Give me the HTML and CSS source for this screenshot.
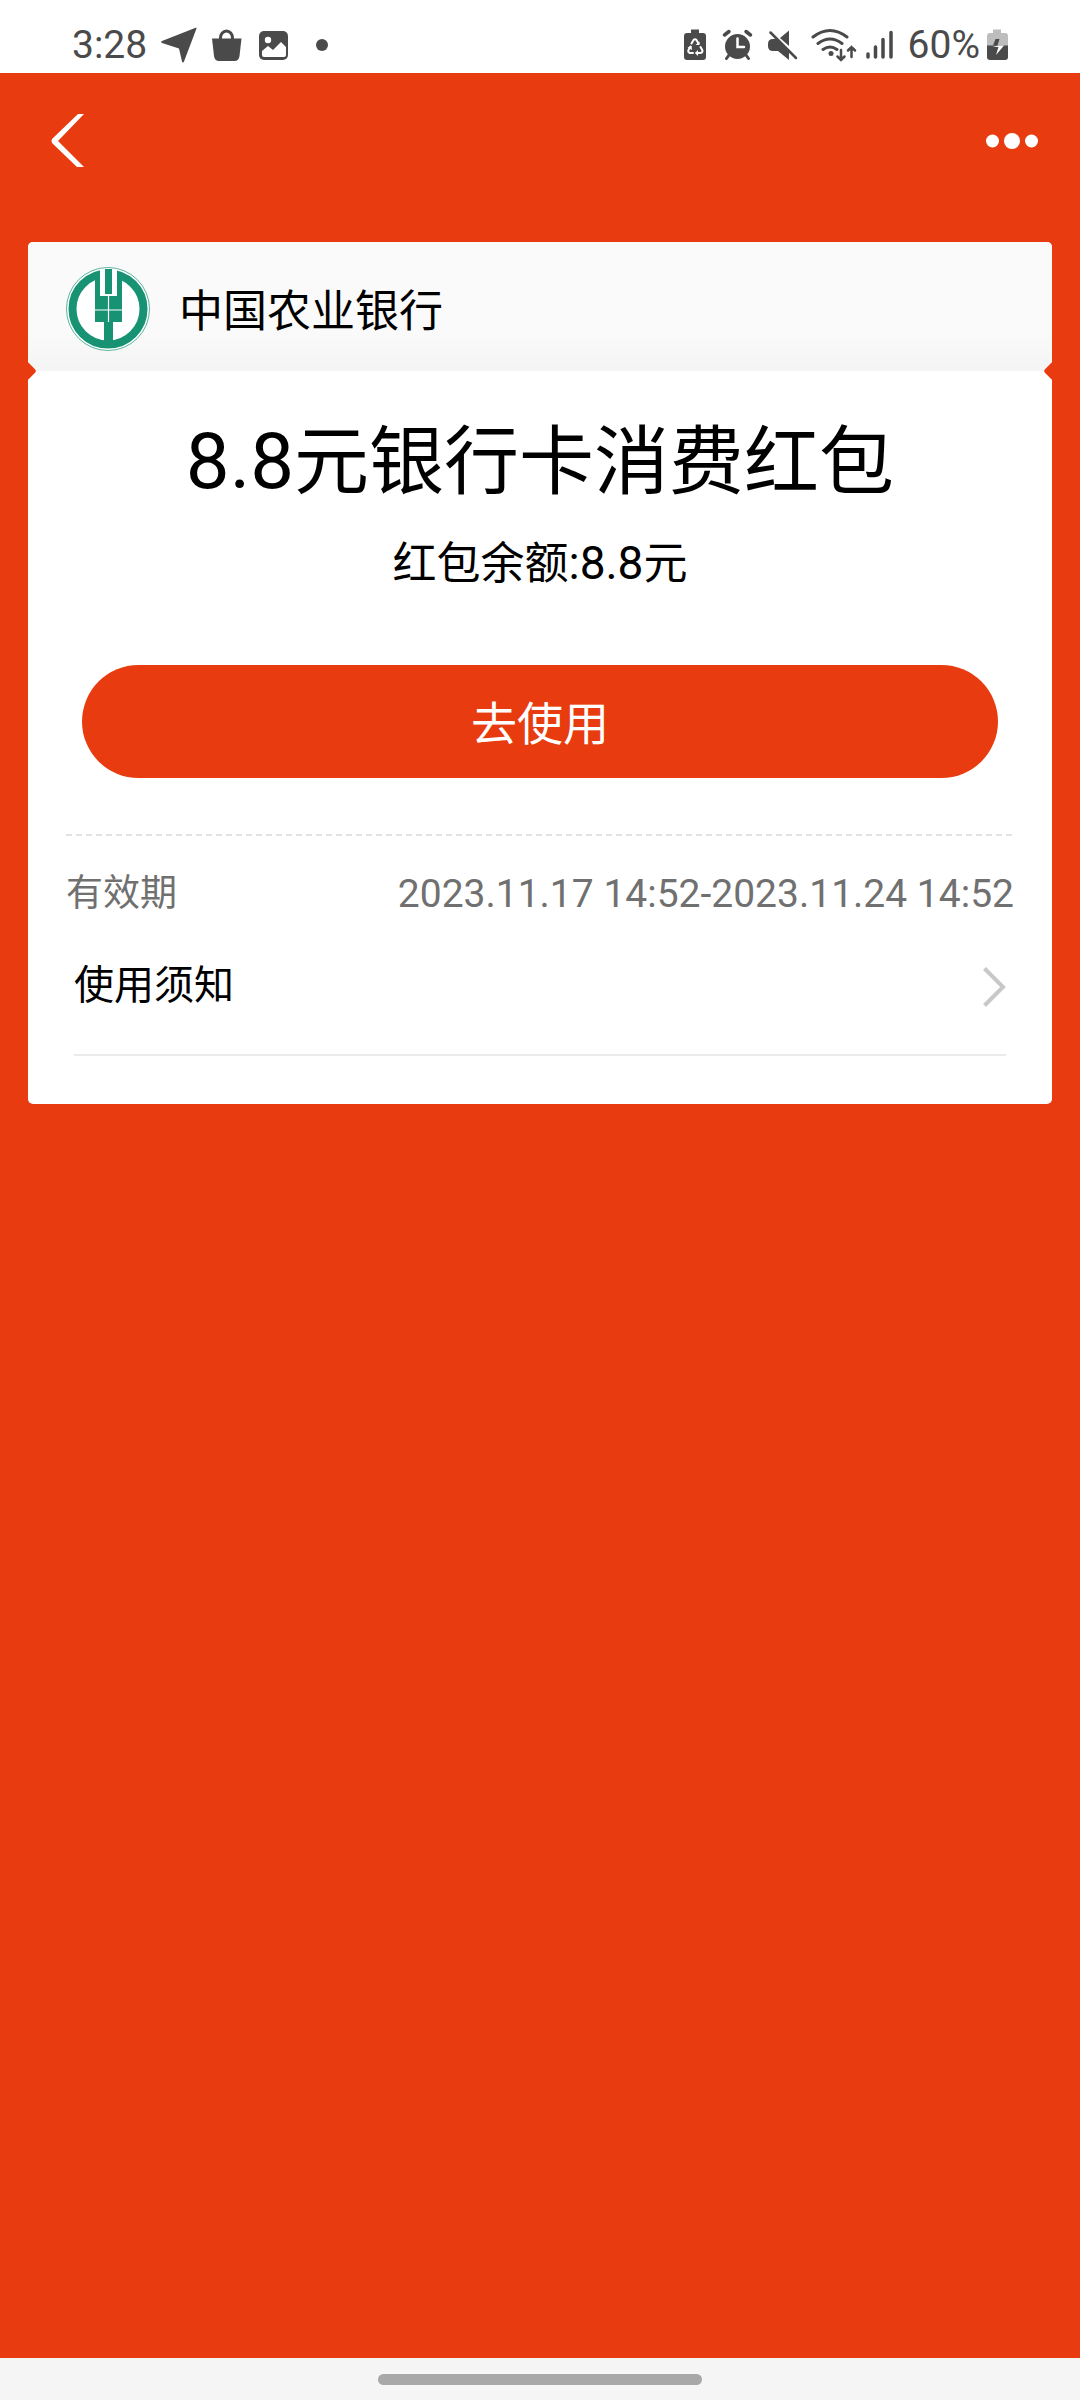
FILE: index.html
```html
<!DOCTYPE html>
<html lang="zh-CN">
<head>
<meta charset="utf-8">
<meta name="viewport" content="width=device-width, initial-scale=1">
<title>银行卡消费红包</title>
<link rel="stylesheet" href="styles.css">
</head>
<body>
<div class="status">
  <div class="status-left">
    <span class="time">3:28</span>
    <svg width="36" height="36" viewBox="0 0 36 36"><path d="M35.500 1.500 23 34.500c-.4 1.300-1.700 1.300-2 0L18 21.500 1 16c-1.200-.5-1.200-1.600 0-2L34 1c1-.4 1.800-.2 1.500.5z"/></svg>
    <svg width="36" height="36" viewBox="0 0 36 36"><path d="M3 11.500h29.500L30.500 29q-.6 5-5 5H10q-4.400 0-5-5z"/><path d="M11.500 14V11a6 7 0 0 1 12 0v3" class="line" stroke-width="3"/></svg>
    <svg width="36" height="36" viewBox="0 0 36 36"><rect x="2" y="4" width="29" height="29" rx="5"/><circle cx="11" cy="13" r="3.200" class="cut"/><path d="M5 24l6-5 5 4 8-8 5 5v8q0 2-2 2H7q-2 0-2-2z" class="cut"/></svg>
    <svg width="36" height="36" viewBox="0 0 36 36"><circle cx="17" cy="18" r="6"/></svg>
  </div>
  <div class="status-right">
    <svg width="32" height="36" viewBox="0 0 32 36"><path d="M7 2.500h8V6h4q3 0 3 3v21q0 3-3 3H3q-3 0-3-3V9q0-3 3-3h4z"/><path d="M7.500 16.500 9.500 13q1.500-1.500 3 0l2 3.500M16.500 20l2 3.500q0 2.500-2.500 2.500h-3.500M9 26H6q-2.500-1-1.500-3l2-3.500" class="line white" stroke-width="2"/><path d="M15.500 14.500v3.500h-4zM14 23v6l-3-3zM3.500 20.500l4-1.500.5 4z" class="cut"/></svg>
    <svg width="40" height="36" viewBox="0 0 40 36"><circle cx="15.500" cy="19.500" r="12.500"/><path d="M2.500 8 7 4.500M28.500 8 24 4.500" class="line" stroke-width="3.500"/><path d="M7 28l-2.500 3.500M24 28l2.500 3.500" class="line" stroke-width="3"/><path d="M15.500 11.500v8.500h6.500" class="line white" stroke-width="2.500"/></svg>
    <svg width="36" height="36" viewBox="0 0 36 36"><path d="M12 11 21 3.500V19zM8.500 12 21 25v8L10 24H5q-5 0-5-5v-2q0-5 5-5z"/><path d="M2.500 5.500 28 31" class="line" stroke-width="2.500"/></svg>
    <svg width="48" height="36" viewBox="0 0 48 36"><g class="line" stroke-width="3"><path d="M3 10q17-13 34 0M8 16.500q12-9 24 0M13 22.500q7-5 14 0"/></g><circle cx="21" cy="26.500" r="2.500"/><path d="M31 23v10M27.500 29.500 31 33l3.500-3.500M41.500 30V20M38 23.500l3.500-3.500 3.500 3.500" class="line" stroke-width="2.500"/></svg>
    <svg width="38" height="36" viewBox="0 0 38 36"><path d="M4 27v3M11.500 20v10M19 12.500V30M27 5.500V30" class="line" stroke-width="3.500"/></svg>
    <span>60%</span>
    <svg width="24" height="36" viewBox="0 0 24 36"><path d="M7 2.500h8V6h4q3 0 3 3v10H1V9q0-3 3-3h3z" fill="#bdbdbd"/><path d="M1 18.500h21V30q0 3-3 3H4q-3 0-3-3z"/><path d="M7 18.500 9.500 12h4l-2 6.500z"/><path d="M6.500 20h6L10 28l8-9.500h-5" class="cut"/></svg>
  </div>
</div>

<main class="page">
  <header class="nav">
    <button class="nav-button" aria-label="返回"><svg width="36" height="56" viewBox="0 0 36 56"><path d="M33 1h-6L1 26q-1 2 0 4l25 24h7L7 28z" fill="#fff"/></svg></button>
    <button class="nav-button" aria-label="更多"><svg width="52" height="16" viewBox="0 0 52 16"><g fill="#fff"><circle cx="6.500" cy="8" r="6.500"/><circle cx="26" cy="8" r="8"/><circle cx="45.500" cy="8" r="6.500"/></g></svg></button>
  </header>

  <section class="card">
    <div class="bank">
      <svg width="84" height="84" viewBox="0 0 84 84">
        <circle cx="42" cy="42" r="41.500" fill="#fff" stroke="#179374" stroke-width=".7"/>
        <circle cx="42" cy="42" r="35.500" fill="none" stroke="#179374" stroke-width="8"/>
        <path d="M29 8h27v47h-9v25h-9V55h-9z" fill="#179374"/>
        <path d="M34 2h17v27H34z" fill="#fff"/>
        <path d="M39 2h7v25h-7z" fill="#179374"/>
        <path d="M42.500 28v27M29 43h27" stroke="#fff" stroke-width="1.200"/>
      </svg>
      <span class="bank-name">中国农业银行</span>
    </div>
    <div class="coupon">
      <h1><span class="amount">8.8</span>元银行卡消费红包</h1>
      <p class="balance">红包余额<span class="amount">:8.8</span>元</p>
      <button class="use">去使用</button>
      <svg class="dash" width="100%" height="2"><line x1="0" y1="1" x2="100%" y2="1" stroke="#e2e2e2" stroke-width="2" stroke-dasharray="6 4"/></svg>
      <dl class="validity">
        <dt>有效期</dt>
        <dd>2023.11.17 14:52-2023.11.24 14:52</dd>
      </dl>
      <button class="notice">
        <span>使用须知</span>
        <svg width="23" height="40" viewBox="0 0 23 40"><path d="M1.500 1.500 20 20 1.500 38.500" fill="none" stroke="#c8c8c8" stroke-width="4"/></svg>
      </button>
    </div>
  </section>
</main>

<div class="home"><span class="home-pill"></span></div>
</body>
</html>
```
FILE: styles.css
```css
* {
  box-sizing: border-box;
}

body {
  margin: 0;
  min-height: 100vh;
  display: flex;
  flex-direction: column;
  background: #e83b10;
  color: #000;
  font-family: Roboto, "Noto Sans CJK SC", sans-serif;
}

svg {
  display: block;
  flex: none;
}

button {
  border: 0;
  padding: 0;
  background: none;
  color: inherit;
  font: inherit;
  cursor: pointer;
}

.status {
  display: flex;
  justify-content: space-between;
  height: 73px;
  padding: 17px 70px 0 72px;
  background: #fff;
  color: #4a4a4a;
  fill: #4a4a4a;
  font-size: 39px;
  line-height: 56px;
}

.status-left,
.status-right {
  display: flex;
  align-items: center;
  height: 56px;
}

.status-left {
  gap: 12px;
}

.status-right {
  gap: 6px;
}

.time {
  padding-right: 2px;
}

.line {
  fill: none;
  stroke: #4a4a4a;
  stroke-linecap: round;
}

.white {
  stroke: #fff;
}

.cut {
  fill: #fff;
}

.page {
  flex: 1;
}

.nav {
  display: flex;
  justify-content: space-between;
  align-items: center;
  height: 136px;
  padding: 0 42px 0 51px;
}

.card {
  position: relative;
  margin: 33px 28px 0;
  border-radius: 5px;
  background: #fff;
}

/* ticket notches where the bank strip meets the coupon */
.card::before,
.card::after {
  content: "";
  position: absolute;
  top: 122px;
  width: 14px;
  height: 14px;
  border-radius: 3px;
  background: #e83b10;
  transform: rotate(45deg);
}

.card::before {
  left: -8px;
}

.card::after {
  right: -8px;
}

.bank {
  display: flex;
  align-items: center;
  gap: 29px;
  height: 129px;
  padding: 4px 38px 0;
  border-radius: 5px 5px 0 0;
  background: linear-gradient(#fafafa 70%, #f4f4f4);
  font-size: 44px;
  line-height: 64px;
}

.bank-name {
  padding-top: 6px;
}

.coupon {
  display: flex;
  flex-direction: column;
  padding: 47px 38px 48px;
}

h1 {
  margin: 0;
  font-size: 75px;
  font-weight: 400;
  line-height: 88px;
  text-align: center;
}

h1 .amount {
  font-size: 78px;
}

.balance {
  margin: 25px 0 0;
  font-size: 44px;
  line-height: 64px;
  text-align: center;
}

.balance .amount {
  font-size: 46px;
}

.use {
  height: 113px;
  margin: 69px 16px 56px;
  padding-bottom: 4px;
  border-radius: 57px;
  background: #e83b10;
  color: #fff;
  font-size: 46px;
}

.validity {
  display: flex;
  justify-content: space-between;
  margin: 30px 0 0;
  color: #707070;
  line-height: 56px;
}

.validity dt {
  font-size: 37px;
}

.validity dd {
  margin: 0;
  font-size: 39px;
}

.notice {
  display: flex;
  justify-content: space-between;
  align-items: center;
  height: 134px;
  margin: 0 8px;
  padding-bottom: 2px;
  border-bottom: 2px solid #ebebeb;
  font-size: 40px;
  line-height: 56px;
}

.notice span {
  padding-bottom: 2px;
}

.home {
  display: flex;
  justify-content: center;
  align-items: center;
  height: 42px;
  background: #f5f5f5;
}

.home-pill {
  width: 30%;
  height: 11px;
  border-radius: 6px;
  background: #a8a8a8;
}
```
